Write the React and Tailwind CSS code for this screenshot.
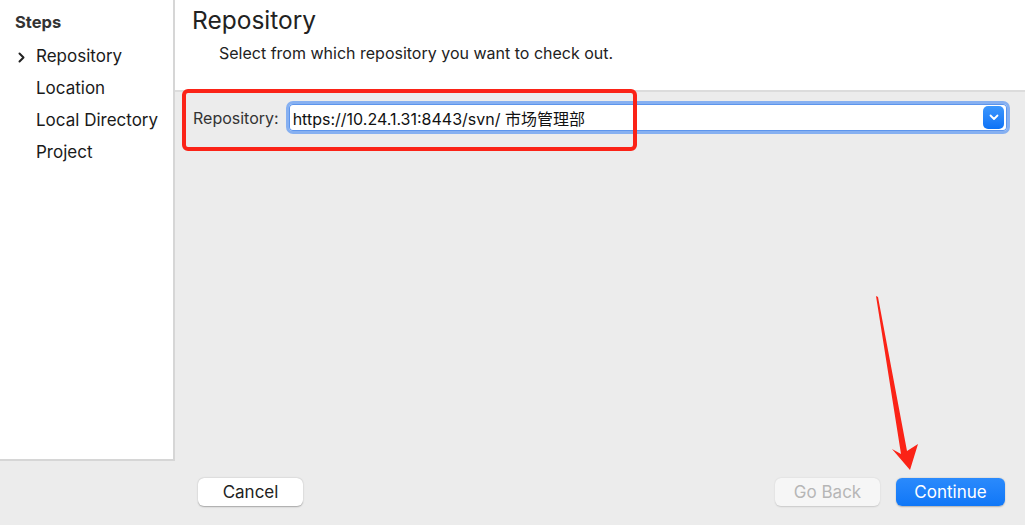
import React from 'react';

const steps = ['Repository', 'Location', 'Local Directory', 'Project'];

const App = () => {
  return (
    <div className="relative w-[1025px] h-[525px] overflow-hidden bg-[#ececec] text-[#222] font-['Inter','Noto_Sans_CJK_SC',sans-serif]">
      <div className="flex h-[461px]">
        {/* Steps sidebar */}
        <aside className="w-[175px] shrink-0 bg-white border-r-2 border-b-2 border-[#d6d6d6] pt-[11px]">
          <h3 className="pl-[15px] text-[16.5px] leading-[22px] font-bold text-[#333]">Steps</h3>
          <ul className="mt-[8px]">
            {steps.map((step, idx) => (
              <li key={step} className="flex items-center h-[32px] text-[17px] text-[#1a1a1a]">
                <span className="w-[36px] flex justify-center pl-[6px]">
                  {idx === 0 && (
                    <svg width="7" height="11" viewBox="0 0 7 11">
                      <path d="M1.5 1.5 L5.5 5.5 L1.5 9.5" fill="none" stroke="#222" strokeWidth="2" strokeLinecap="round" strokeLinejoin="round" />
                    </svg>
                  )}
                </span>
                {step}
              </li>
            ))}
          </ul>
        </aside>

        {/* Main panel */}
        <main className="flex-1 flex flex-col">
          <header className="h-[92px] shrink-0 bg-white border-b-2 border-[#dcdcdc] pl-[17px] pt-[5px]">
            <h1 className="text-[24.5px] leading-[30px] text-[#222]">Repository</h1>
            <p className="mt-[7px] pl-[27px] text-[16px] leading-[22px] text-[#222]">
              Select from which repository you want to check out.
            </p>
          </header>

          <div className="flex items-center pl-[18px] pr-[15px] pt-[9px]">
            <label className="text-[16px] text-[#333] mr-[7px]">Repository:</label>
            <div className="flex-1 h-[33px] flex items-center rounded-[7px] border-[3px] border-[#86b0f1] bg-white shadow-[inset_0_0_0_1px_#5d95ec] pl-[4px] pr-[3px]">
              <span className="flex-1 text-[16px] text-[#111] pt-[2px]">https://10.24.1.31:8443/svn/ 市场管理部</span>
              <span className="w-[21px] h-[23px] rounded-[5px] bg-gradient-to-b from-[#3c97fd] to-[#0b72f6] flex items-center justify-center">
                <svg width="10" height="7" viewBox="0 0 10 7">
                  <path d="M1.5 1.5 L5 5 L8.5 1.5" fill="none" stroke="#fff" strokeWidth="1.8" strokeLinecap="round" strokeLinejoin="round" />
                </svg>
              </span>
            </div>
          </div>
        </main>
      </div>

      {/* Footer buttons */}
      <footer className="flex items-start pt-[17px] pl-[198px] pr-[20px]">
        <button type="button" className="w-[105px] h-[28px] rounded-[6px] bg-white shadow-[0_0.5px_1.5px_rgba(0,0,0,0.3)] text-[17px] text-[#222] pt-[1px]">
          Cancel
        </button>
        <div className="ml-auto flex gap-[16px]">
          <button type="button" disabled className="w-[105px] h-[28px] rounded-[6px] bg-[#f6f6f6] shadow-[0_0.5px_1.5px_rgba(0,0,0,0.15)] text-[17px] text-[#b6b6b6] pt-[1px]">
            Go Back
          </button>
          <button type="button" className="w-[109px] h-[28px] rounded-[6px] bg-gradient-to-b from-[#2a8afc] to-[#0f77f7] shadow-[0_0.5px_1.5px_rgba(0,0,0,0.25)] text-[17px] text-white pt-[1px]">
            Continue
          </button>
        </div>
      </footer>

      {/* Red annotation: highlight box */}
      <div className="absolute left-[182px] top-[89px] w-[455px] h-[62px] rounded-[6px] border-[4px] border-[#fb2317] pointer-events-none" />

      {/* Red annotation: arrow */}
      <svg className="absolute left-0 top-0 pointer-events-none" width="1025" height="525" viewBox="0 0 1025 525">
        <polygon points="876,296 878,297 907,451 918,444 910,470 892,449 901,454" fill="#fb2317" />
      </svg>
    </div>
  );
};

export default App;
